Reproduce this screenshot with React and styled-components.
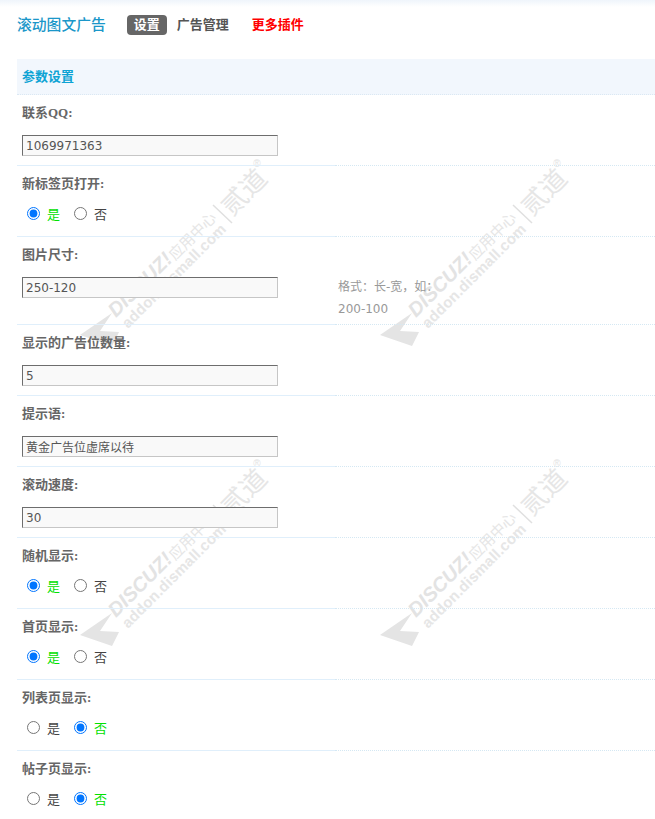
import React from 'react';
import styled, { createGlobalStyle } from 'styled-components';

const Global = createGlobalStyle`
    html {
        background: #fff;
    }
    html, body {
        margin: 0;
        padding: 0;
        height: 819px;
        overflow: hidden;
    }
    body {
        font-family: "DejaVu Sans", "Noto Sans CJK SC", sans-serif;
        font-size: 12px;
        color: #444;
    }
`;

const Page = styled.div`
    position: relative;
    padding-left: 17px;
    background: linear-gradient(#eff5fb, transparent 7px);
`;

// the watermark sits behind everything, like a repeating body background
const Watermarks = styled.div`
    position: absolute;
    z-index: -1;
    top: 100px;
    left: 0;
    display: grid;
    grid-template-columns: 300px 300px;
    grid-auto-rows: 300px;
`;

const Nav = styled.div`
    height: 50px;
    display: flex;
    align-items: center;
`;

const AppTitle = styled.h1`
    margin: 0 21px 4px 0;
    font-size: 14.8px;
    font-weight: 500;
    color: #1b97c9;
`;

const NavItem = styled.a`
    height: 20px;
    line-height: 20px;
    padding: 0 7px;
    margin-right: ${props => props.gap}px;
    border-radius: 4px;
    font-size: 13px;
    font-weight: 700;
    color: ${props => (props.current ? '#fff' : props.hot ? '#f00' : '#555')};
    background: ${props => (props.current ? '#666' : 'transparent')};
    ${props => !props.current && 'padding: 0;'}
`;

const Section = styled.div`
    margin-top: 9px;
    height: 35px;
    line-height: 36px;
    padding-left: 5px;
    background: #f2f7fd;
    border-bottom: 1px dotted #dbe8f3;
    font-size: 13px;
    font-weight: 700;
    color: #0da3d4;
`;

const Label = styled.div`
    height: 36px;
    line-height: 36px;
    padding-left: 5px;
    font-family: "Liberation Serif", "Noto Sans CJK SC", serif;
    font-size: 13px;
    font-weight: 700;
    color: #666;
`;

const Cells = styled.div`
    display: grid;
    grid-template-columns: 318px 1fr;
`;

const Cell = styled.div`
    padding: 4px 0 9px 5px;
    border-bottom: 1px solid #e0effb;
`;

const HintCell = styled.div`
    padding: 3px 0 4px 3px;
    border-bottom: 1px dotted #d5e8f3;
    line-height: 22px;
    color: #999;
`;

const Input = styled.input`
    display: block;
    box-sizing: border-box;
    width: 256px;
    height: 21px;
    padding: 0 3px;
    border: 1px solid;
    border-color: #6d6d6d #c6c6c6 #c6c6c6 #6d6d6d;
    background: #f9f9f9;
    font-family: "DejaVu Sans", "Noto Sans CJK SC", sans-serif;
    font-size: 12px;
    color: #555;
    outline: none;
`;

const Choices = styled.div`
    height: 14px;
    margin-bottom: 7px;
    display: flex;
    align-items: center;
    padding-left: 5px;
`;

const Choice = styled.label`
    display: flex;
    align-items: center;
    margin-right: 14px;
    font-size: 13px;
    color: ${props => (props.on ? '#00e000' : '#444')};
`;

const Radio = styled.input`
    width: 13px;
    height: 13px;
    margin: 0 7px 0 0;
`;

const Mark = () => (
    <svg width="300" height="300" viewBox="0 0 300 300">
        <polygon points="80,235 112,213 100,231 119,232 112,246" fill="#e4e4e4" />
        <text
            transform="translate(116 218) rotate(-45)"
            fontFamily="Liberation Sans"
            fontSize="20"
            fontWeight="700"
            fontStyle="italic"
            fill="#e3e3e3"
        >DISCUZ!</text>
        <text
            transform="translate(175 161) rotate(-45)"
            fontFamily="Noto Sans CJK SC"
            fontSize="15"
            fill="#e6e6e6"
        >应用中心</text>
        <text
            transform="translate(128 229) rotate(-45)"
            fontFamily="Liberation Sans"
            fontSize="15"
            fontWeight="700"
            textLength="140"
            fill="#e6e6e6"
        >addon.dismall.com</text>
        <line x1="213" y1="105" x2="232" y2="123" stroke="#e0e0e0" strokeWidth="1.5" />
        <text
            transform="translate(232 117) rotate(-45)"
            fontFamily="Noto Sans CJK SC"
            fontSize="26"
            fill="#e6e6e6"
        >贰道</text>
        <text x="257" y="67" textAnchor="middle" fontFamily="Liberation Sans" fontSize="10" fill="#e3e3e3">®</text>
    </svg>
);

const Row = ({ label, hint, children }) => (
    <div>
        <Label>{label}</Label>
        <Cells>
            <Cell>{children}</Cell>
            <HintCell>{hint}</HintCell>
        </Cells>
    </div>
);

const YesNo = ({ name, yes }) => (
    <Choices>
        <Choice on={yes ? 1 : 0}>
            <Radio type="radio" name={name} defaultChecked={yes} />是
        </Choice>
        <Choice on={yes ? 0 : 1}>
            <Radio type="radio" name={name} defaultChecked={!yes} />否
        </Choice>
    </Choices>
);

const Text = ({ value }) => <Input type="text" defaultValue={value} />;

export default function App() {
    return (
        <Page>
            <Global />
            <Watermarks>
                <Mark />
                <Mark />
                <Mark />
                <Mark />
            </Watermarks>
            <Nav>
                <AppTitle>滚动图文广告</AppTitle>
                <NavItem current gap={10}>设置</NavItem>
                <NavItem gap={23}>广告管理</NavItem>
                <NavItem hot>更多插件</NavItem>
            </Nav>
            <Section>参数设置</Section>
            <Row label="联系QQ:"><Text value="1069971363" /></Row>
            <Row label="新标签页打开:"><YesNo name="newtab" yes /></Row>
            <Row label="图片尺寸:" hint={<>{'格式\uFF1A长-宽\uFF0C如\uFF1A'}<br />200-100</>}>
                <Text value="250-120" />
            </Row>
            <Row label="显示的广告位数量:"><Text value="5" /></Row>
            <Row label="提示语:"><Text value="黄金广告位虚席以待" /></Row>
            <Row label="滚动速度:"><Text value="30" /></Row>
            <Row label="随机显示:"><YesNo name="random" yes /></Row>
            <Row label="首页显示:"><YesNo name="home" yes /></Row>
            <Row label="列表页显示:"><YesNo name="list" /></Row>
            <Row label="帖子页显示:"><YesNo name="post" /></Row>
        </Page>
    );
}
